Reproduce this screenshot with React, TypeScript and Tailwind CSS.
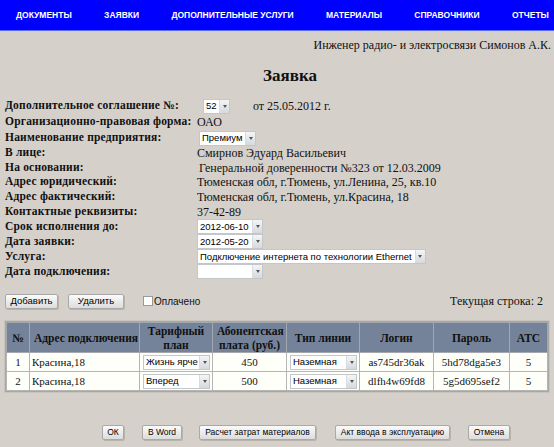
import type { ReactNode } from "react";

const serif = "font-['Liberation_Serif','Times_New_Roman',serif]";
const sans = "font-['Liberation_Sans',Arial,sans-serif]";

const navItems = ["ДОКУМЕНТЫ", "ЗАЯВКИ", "ДОПОЛНИТЕЛЬНЫЕ УСЛУГИ", "МАТЕРИАЛЫ", "СПРАВОЧНИКИ", "ОТЧЕТЫ"];

function Select({ value, width = "" }: { value: string; width?: string }) {
  return (
    <div
      className={`flex h-[15px] items-stretch border border-[#c3c7cc] bg-white ${sans} text-[9.5px] leading-none text-black ${width}`}
    >
      <span className="flex flex-1 items-center overflow-hidden whitespace-nowrap pl-[2px] pr-[3px]">{value}</span>
      <span className="flex w-[10px] items-center justify-center border-l border-[#d8dbe0] bg-gradient-to-b from-[#f4f5f6] to-[#d6d9dd]">
        <span className="h-0 w-0 border-x-[2.5px] border-t-[3px] border-x-transparent border-t-[#555]" />
      </span>
    </div>
  );
}

function Button({ children, className = "" }: { children: ReactNode; className?: string }) {
  return (
    <button
      className={`h-[15px] whitespace-nowrap rounded-[2px] border border-[#a9a9a9] bg-gradient-to-b from-[#fbfbfb] to-[#dcdcdc] ${sans} leading-none text-black shadow-[1px_1px_0_#b8b4ac] ${className}`}
    >
      {children}
    </button>
  );
}

function Row({ label, children, h = "h-[15px]" }: { label: string; children: ReactNode; h?: string }) {
  return (
    <div className={`flex items-center ${h}`}>
      <span className="w-[192px] shrink-0 whitespace-nowrap text-[11.5px] font-bold tracking-[0.2px]">{label}</span>
      <div className="flex items-center whitespace-nowrap">{children}</div>
    </div>
  );
}

const rows = [
  { n: 1, addr: "Красина,18", plan: "Жизнь ярче", fee: "450", line: "Наземная", login: "as745dr36ak", pass: "5hd78dga5e3", ats: "5" },
  { n: 2, addr: "Красина,18", plan: "Вперед", fee: "500", line: "Наземная", login: "dlfh4w69fd8", pass: "5g5d695sef2", ats: "5" }
];

export default function App() {
  const th = "whitespace-nowrap border border-[#a4a8ae] px-1 text-[11.5px] font-bold leading-[14px]";
  const td = "whitespace-nowrap border border-[#b5b5b5] px-1 text-[11px]";
  return (
    <div className={`h-[447px] w-[554px] overflow-hidden bg-[#d5d0c9] ${serif} text-[12px] text-[#111]`}>
      <nav className="flex h-[31px] items-center justify-between border-b border-[#5b6cff] bg-[#0000ff] pl-4 pr-[5px]">
        {navItems.map((item) => (
          <span key={item} className={`${sans} whitespace-nowrap text-[8.5px] font-bold text-white`}>
            {item}
          </span>
        ))}
      </nav>

      <div className="pr-[3px] pt-[7px] text-right leading-[15px]">
        Инженер радио- и электросвязи Симонов А.К.
      </div>
      <h1 className="mt-[13px] pl-[26px] text-center text-[17px] font-bold leading-[20px]">Заявка</h1>

      <div className="mt-[12px] pl-[5px]">
        <Row label="Дополнительное соглашение №:" h="h-[16px]">
          <span className="ml-[6px]">
            <Select value="52" width="w-[27px]" />
          </span>
          <span className="ml-[23px]">от 25.05.2012 г.</span>
        </Row>
        <Row label="Организационно-правовая форма:" h="h-[16px]">
          ОАО
        </Row>
        <Row label="Наименование предприятия:" h="h-[16px]">
          <span className="ml-[2px]">
            <Select value="Премиум" />
          </span>
        </Row>
        <Row label="В лице:" h="h-[14px]">
          Смирнов Эдуард Васильевич
        </Row>
        <Row label="На основании:">
          <span className="ml-[2px]">Генеральной доверенности №323 от 12.03.2009</span>
        </Row>
        <Row label="Адрес юридический:" h="h-[14px]">
          Тюменская обл, г.Тюмень, ул.Ленина, 25, кв.10
        </Row>
        <Row label="Адрес фактический:">Тюменская обл, г.Тюмень, ул.Красина, 18</Row>
        <Row label="Контактные реквизиты:">37-42-89</Row>
        <Row label="Срок исполнения до:">
          <Select value="2012-06-10" width="w-[66px]" />
        </Row>
        <Row label="Дата заявки:">
          <Select value="2012-05-20" width="w-[66px]" />
        </Row>
        <Row label="Услуга:">
          <Select value="Подключение интернета по технологии Ethernet" />
        </Row>
        <Row label="Дата подключения:">
          <Select value="" width="w-[66px]" />
        </Row>
      </div>

      <div className="mt-[13px] flex items-center pl-[5px] pr-[11px]">
        <Button className="w-[53px] text-[9.5px]">Добавить</Button>
        <Button className="ml-[10px] w-[56px] text-[9.5px]">Удалить</Button>
        <span className="ml-[19px] h-[10px] w-[10px] border border-[#9a9a9a] bg-white" />
        <span className={`ml-[1px] ${sans} text-[10px]`}>Оплачено</span>
        <span className="ml-auto">Текущая строка: 2</span>
      </div>

      <div className="mx-[5px] mt-[11px] border border-[#a7a7a7] shadow-[0_0_0_1px_#c9c5bd]">
        <table className="w-full table-fixed border-collapse text-center">
          <thead>
            <tr className="h-[30px] bg-[#75839a]">
              <th className={`${th} w-[23px]`}>№</th>
              <th className={`${th} w-[110px]`}>Адрес подключения</th>
              <th className={`${th} w-[73px]`}>
                Тарифный
                <br />
                план
              </th>
              <th className={`${th} w-[74px]`}>
                Абонентская
                <br />
                плата (руб.)
              </th>
              <th className={`${th} w-[73px]`}>Тип линии</th>
              <th className={`${th} w-[74px]`}>Логин</th>
              <th className={`${th} w-[76px]`}>Пароль</th>
              <th className={th}>АТС</th>
            </tr>
          </thead>
          <tbody>
            {rows.map((r) => (
              <tr key={r.n} className="h-[19px] bg-[#fffff9]">
                <td className={td}>{r.n}</td>
                <td className={`${td} px-[2px] text-left`}>{r.addr}</td>
                <td className={`${td} px-[3px]`}>
                  <Select value={r.plan} width="w-[67px]" />
                </td>
                <td className={td}>{r.fee}</td>
                <td className={`${td} px-[3px]`}>
                  <Select value={r.line} width="w-[67px]" />
                </td>
                <td className={td}>{r.login}</td>
                <td className={td}>{r.pass}</td>
                <td className={td}>{r.ats}</td>
              </tr>
            ))}
          </tbody>
        </table>
      </div>

      <div className="mt-[33px] flex items-center pl-[102px] text-[8.5px]">
        <Button className="w-[22px]">ОК</Button>
        <Button className="ml-[18px] w-[40px]">В Word</Button>
        <Button className="ml-[17px] w-[117px]">Расчет затрат материалов</Button>
        <Button className="ml-[19px] w-[115px]">Акт ввода в эксплуатацию</Button>
        <Button className="ml-[18px] w-[42px]">Отмена</Button>
      </div>
    </div>
  );
}
